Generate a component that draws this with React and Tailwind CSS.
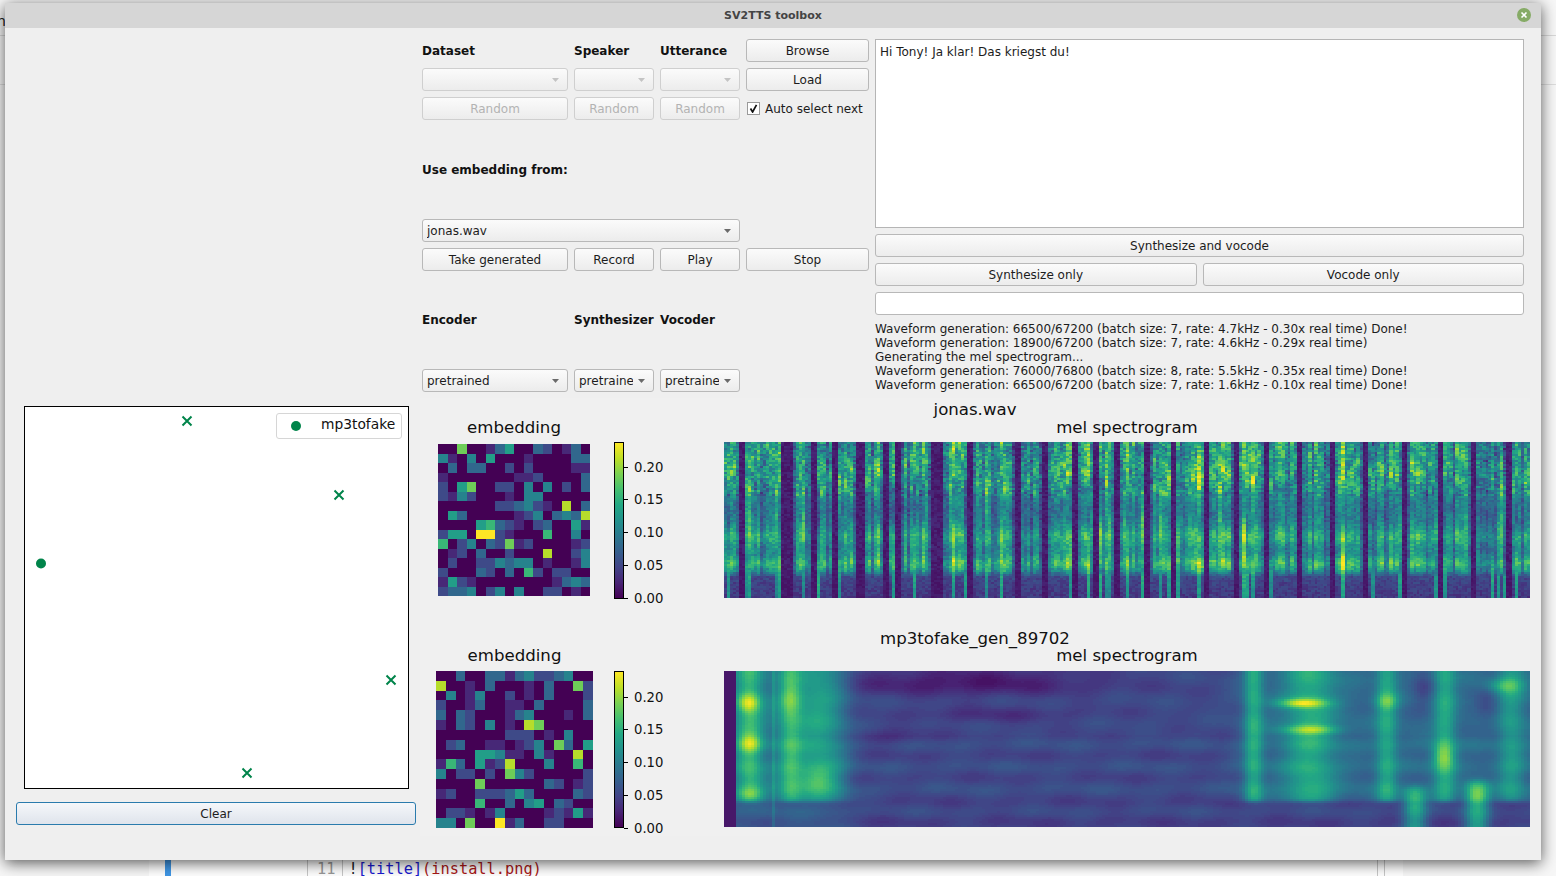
import React from 'react';

const font = { fontFamily: '"DejaVu Sans", sans-serif' };

// viridis lookup
const VIRIDIS = ['#440154', '#482475', '#414487', '#355f8d', '#2a788e', '#21918c', '#22a884', '#44bf70', '#7ad151', '#bddf26', '#fde725'];
const toRgb = (h) => [1, 3, 5].map((i) => parseInt(h.slice(i, i + 2), 16));
const viridis = (v) => {
  const t = Math.max(0, Math.min(1, v)) * (VIRIDIS.length - 1);
  const i = Math.min(Math.floor(t), VIRIDIS.length - 2);
  const a = toRgb(VIRIDIS[i]);
  const b = toRgb(VIRIDIS[i + 1]);
  const f = t - i;
  return `rgb(${a.map((c, k) => Math.round(c + (b[k] - c) * f)).join(',')})`;
};

const rng = (seed) => () => {
  seed = (seed * 1664525 + 1013904223) % 4294967296;
  return seed / 4294967296;
};

const HEAT_A = [
  '0070013500320130', '4104050001000033', '0303300202000011', '1000000011200003',
  '2057002204040203', '2142000104400000', '0000002234210803', '0530000012403438',
  '0000563210230051', '2550992100060040', '6024032712000012', '0120300200080024',
  '0200224344010014', '2000320306202200', '1521000000001343', '2334024040022010',
];
const HEAT_B = [
  '0030033134223400', '8001030001030072', '0401400201030002', '2001300110300003',
  '3032000134000103', '1032040108700000', '0000000222010400', '0230011012407305',
  '0000554110410080', '1630512800040060', '4022020742000002', '0000700000032012',
  '1200222353000032', '0000600304503200', '0221014000012151', '4407009130022000',
];

function Heatmap({ data, size }) {
  return (
    <svg width={size} height={size} viewBox="0 0 16 16" shapeRendering="crispEdges" className="block">
      {data.map((row, y) =>
        row.split('').map((c, x) => <rect key={`${x}-${y}`} x={x} y={y} width="1.02" height="1.02" fill={viridis(Number(c) / 9)} />)
      )}
    </svg>
  );
}

// groups the cells by colour so the svg stays small
function Spectro({ value, cols, rows, height }) {
  const buckets = {};
  const w = 806 / cols;
  const h = height / rows;
  for (let x = 0; x < cols; x++) {
    for (let y = 0; y < rows; y++) {
      const b = Math.round(Math.max(0, Math.min(1, value(x / cols, y / rows, x, y))) * 63);
      (buckets[b] = buckets[b] || []).push(`M${(x * w).toFixed(1)} ${(y * h).toFixed(1)}h${(w + 0.4).toFixed(1)}v${(h + 0.4).toFixed(1)}h-${(w + 0.4).toFixed(1)}z`);
    }
  }
  return (
    <svg width="806" height={height} viewBox={`0 0 806 ${height}`} shapeRendering="crispEdges" className="block">
      {Object.keys(buckets).map((b) => <path key={b} d={buckets[b].join('')} fill={viridis(b / 63)} />)}
    </svg>
  );
}

// first spectrogram: loud speech with silent gaps
const DARK = [[17, 21], [57, 61], [64, 69], [88, 91], [109, 114], [133, 140], [159, 164], [173, 178], [207, 211], [214, 218], [243, 248], [293, 296], [318, 322], [350, 354], [371, 375], [392, 397], [420, 425], [447, 450], [481, 486], [512, 516], [540, 545], [575, 580], [608, 612], [640, 644], [680, 684], [716, 719], [748, 752], [785, 790]];
const makeSpeech = () => {
  const cols = 269;
  const r = rng(77);
  const gain = [];
  const streak = [];
  const phase = [];
  for (let i = 0; i < cols; i++) {
    let g = 0.9 + r() * 0.3;
    if (r() < 0.22) g = 0.6 + r() * 0.25;
    gain.push(g);
    streak.push(r() < 0.35 ? 0.08 + r() * 0.2 : 0);
    phase.push(r() * 6.28);
  }
  DARK.forEach(([a, b]) => {
    for (let px = a; px <= b; px += 3) {
      const c = Math.floor(px / 3);
      gain[c] = 0;
      if (c > 0 && gain[c - 1] > 0) gain[c - 1] *= 0.8;
      if (c < cols - 1) gain[c + 1] *= 0.8;
    }
  });
  const noise = new Float32Array(cols * 80).map(() => r());
  return (t, u, x, y) => {
    const g = gain[x];
    const n = noise[x * 78 + y];
    const low = u > 0.86 ? 1 : u > 0.82 ? (u - 0.82) / 0.04 : 0;
    const lowV = g === 0 ? 0.04 + n * 0.05 : 0.16 + n * 0.1 - (u - 0.86) * 0.4 + (streak[x] > 0.18 ? streak[x] * 1.5 : 0);
    if (g === 0) return low ? lowV : 0.04 + n * 0.08;
    let p = 0.46;
    p += 0.1 * Math.exp(-Math.pow((u - 0.18) / 0.16, 2));
    p += 0.14 * Math.exp(-Math.pow((u - 0.6) / 0.05, 2));
    p += 0.18 * Math.exp(-Math.pow((u - 0.77) / 0.04, 2));
    p -= 0.08 * Math.exp(-Math.pow((u - 0.42) / 0.1, 2));
    const formant = 0.08 * Math.sin(u * 34 + phase[x]) + 0.05 * Math.sin(u * 12 + x * 0.11);
    const spread = u < 0.34 ? 0.3 : 0.16;
    const top = p * g + streak[x] * (0.5 + 0.5 * Math.sin(u * 9 + phase[x])) + formant * g * (u < 0.34 ? 1 : 0.4) + (n - 0.5) * spread;
    return top * (1 - low) + lowV * low;
  };
};

// second spectrogram: smooth generated mel
const bump = (x, y, cx, cy, sx, sy, a) => a * Math.exp(-Math.pow((x - cx) / sx, 2) - Math.pow((y - cy) / sy, 2));
const sig = (d) => 1 / (1 + Math.exp(-d));
const COLS_TOP = [[0.03, 0.016, 0.3], [0.08, 0.014, 0.26], [0.115, 0.03, 0.2], [0.655, 0.011, 0.3], [0.725, 0.03, 0.28], [0.82, 0.012, 0.26], [0.892, 0.013, 0.26], [0.975, 0.016, 0.2]];
const SPOTS = [[0.028, 0.2, 0.014, 0.06, 0.3], [0.03, 0.46, 0.014, 0.06, 0.26], [0.08, 0.18, 0.014, 0.09, 0.14], [0.715, 0.2, 0.03, 0.03, 0.4], [0.725, 0.37, 0.036, 0.03, 0.3], [0.82, 0.19, 0.014, 0.05, 0.2], [0.89, 0.54, 0.014, 0.08, 0.28], [0.965, 0.09, 0.024, 0.05, 0.24], [0.115, 0.68, 0.024, 0.08, 0.16], [0.03, 0.78, 0.018, 0.04, 0.14], [0.932, 0.8, 0.014, 0.06, 0.12], [0.855, 0.86, 0.012, 0.05, 0.08]];
const mel = (x, y) => {
  if (x < 0.014) return 0.07;
  const w = sig((0.83 - y) / 0.008);
  const left = sig((0.15 - x) / 0.008);
  const right = sig((x - 0.64) / 0.01);
  let v = 0.22;
  v += 0.015 * Math.sin(x * 90 + y * 13) + 0.015 * Math.sin(x * 37 - y * 29) + 0.025 * Math.sin(y * 44) * (y > 0.4 ? 1 : 0.4);
  v += w * (0.16 * left + 0.12 * right);
  v += (1 - w) * (0.08 * left - 0.02);
  v -= bump(x, y, 0.3, 0.06, 0.16, 0.09, 0.16);
  v -= bump(x, y, 0.33, 0.28, 0.11, 0.05, 0.08);
  v -= bump(x, y, 0.2, 0.42, 0.05, 0.05, 0.08);
  v -= bump(x, y, 0.865, 0.1, 0.015, 0.15, 0.12);
  v -= bump(x, y, 0.945, 0.2, 0.015, 0.15, 0.1);
  COLS_TOP.forEach(([c, s, a]) => { v += w * a * Math.exp(-Math.pow((x - c) / s, 2)); });
  v += 0.32 * sig((y - 0.74) / 0.015) * Math.exp(-Math.pow((x - 0.855) / 0.014, 2));
  v += 0.36 * sig((y - 0.7) / 0.015) * Math.exp(-Math.pow((x - 0.932) / 0.014, 2));
  v += 0.1 * Math.exp(-Math.pow((x - 0.06) / 0.002, 2));
  SPOTS.forEach(([cx, cy, sx, sy, a]) => { v += bump(x, y, cx, cy, sx, sy, a); });
  return v;
};

const speech = makeSpeech();

function Button({ children, disabled, focus, className = '' }) {
  return (
    <button
      className={`h-[23px] rounded-[3px] border text-[12px] leading-none ${
        focus ? 'border-[#2a7bad] bg-linear-to-b from-[#f5f7fa] to-[#dfe4ec] text-[#1c1c1c]' : 'border-[#b8b8b8] bg-linear-to-b from-[#fbfbfb] to-[#ececec]'
      } ${disabled ? 'text-[#b3b3b3] border-[#cfcfcf]' : 'text-[#1c1c1c]'} ${className}`}
    >
      {children}
    </button>
  );
}

function Combo({ value, disabled, clip }) {
  return (
    <div className={`flex h-[23px] items-center rounded-[3px] border bg-linear-to-b from-[#fbfbfb] to-[#ececec] pl-[4px] pr-[8px] text-[12px] text-[#1c1c1c] ${disabled ? 'border-[#cfcfcf]' : 'border-[#b8b8b8]'}`}>
      <span className={`flex-1 overflow-hidden whitespace-nowrap ${clip ? 'max-w-[54px]' : ''}`}>{value}</span>
      <svg width="7" height="4" viewBox="0 0 7 4" className="ml-auto shrink-0"><path d="M0 0h7L3.5 4z" fill={disabled ? '#c4c4c4' : '#6a6a6a'} /></svg>
    </div>
  );
}

const Label = ({ children, className = '' }) => <div className={`flex items-center text-[12px] font-bold text-[#111] whitespace-nowrap ${className}`}>{children}</div>;

function Controls() {
  return (
    <div className="grid grid-cols-[146px_80px_80px_123px] grid-rows-[23px_23px_23px_87px_23px_23px_86px_23px] gap-[6px]">
      <Label>Dataset</Label>
      <Label>Speaker</Label>
      <Label>Utterance</Label>
      <Button>Browse</Button>
      <Combo disabled />
      <Combo disabled />
      <Combo disabled />
      <Button>Load</Button>
      <Button disabled>Random</Button>
      <Button disabled>Random</Button>
      <Button disabled>Random</Button>
      <div className="flex items-center gap-[5px] pl-px text-[12px] text-[#1c1c1c] whitespace-nowrap">
        <span className="flex h-[13px] w-[13px] items-center justify-center border border-[#9a9a9a] bg-white">
          <svg width="9" height="9" viewBox="0 0 9 9"><path d="M1.5 4.5 3.6 8 7.5 .8" fill="none" stroke="#111" strokeWidth="1.7" /></svg>
        </span>
        Auto select next
      </div>
      <Label className="col-span-4">Use embedding from:</Label>
      <div className="col-span-3"><Combo value="jonas.wav" /></div>
      <div />
      <Button>Take generated</Button>
      <Button>Record</Button>
      <Button>Play</Button>
      <Button>Stop</Button>
      <Label>Encoder</Label>
      <Label>Synthesizer</Label>
      <Label>Vocoder</Label>
      <div />
      <Combo value="pretrained" />
      <Combo value="pretrained" clip />
      <Combo value="pretrained" clip />
      <div />
    </div>
  );
}

function SynthPanel() {
  return (
    <div className="flex w-[649px] flex-col gap-[6px]">
      <div className="h-[189px] border border-[#b5b5b5] bg-white px-[4px] py-[4px] text-[12px] leading-[16px] text-[#1c1c1c]">Hi Tony! Ja klar! Das kriegst du!</div>
      <Button className="w-full">Synthesize and vocode</Button>
      <div className="flex gap-[6px]">
        <Button className="flex-1">Synthesize only</Button>
        <Button className="flex-1">Vocode only</Button>
      </div>
      <div className="h-[23px] rounded-[3px] border border-[#b8b8b8] bg-white" />
      <div className="mt-px text-[12px] leading-[14px] text-[#1c1c1c] whitespace-nowrap">
        <div>Waveform generation: 66500/67200 (batch size: 7, rate: 4.7kHz - 0.30x real time) Done!</div>
        <div>Waveform generation: 18900/67200 (batch size: 7, rate: 4.6kHz - 0.29x real time)</div>
        <div>Generating the mel spectrogram...</div>
        <div>Waveform generation: 76000/76800 (batch size: 8, rate: 5.5kHz - 0.35x real time) Done!</div>
        <div>Waveform generation: 66500/67200 (batch size: 7, rate: 1.6kHz - 0.10x real time) Done!</div>
      </div>
    </div>
  );
}

function Colorbar({ className = '', tickTop }) {
  return (
    <div className={`flex ${className}`}>
      <div className="h-[157px] w-[10px] border border-black bg-[linear-gradient(to_top,#440154,#482475,#414487,#355f8d,#2a788e,#21918c,#22a884,#44bf70,#7ad151,#bddf26,#fde725)]" />
      <div className={`${tickTop} flex h-[146px] flex-col justify-between text-[13.2px] leading-[15px] text-[#111]`}>
        {['0.20', '0.15', '0.10', '0.05', '0.00'].map((t) => (
          <div key={t} className="flex items-center gap-[6px]">
            <span className="h-px w-[4px] bg-black" />
            {t}
          </div>
        ))}
      </div>
    </div>
  );
}

function Scatter() {
  const crosses = [[162, 14], [314, 88], [366, 273], [222, 366]];
  return (
    <div className="relative ml-[8px] h-[383px] w-[385px] border border-black bg-white">
      <svg width="383" height="381" className="block">
        <circle cx="16" cy="156.5" r="5" fill="#00844a" />
        {crosses.map(([x, y]) => (
          <path key={x} d={`M${x - 4.5} ${y - 4.5}l9 9m0-9l-9 9`} stroke="#00844a" strokeWidth="2" />
        ))}
      </svg>
      <div className="absolute right-[6px] top-[6px] flex h-[26px] w-[126px] items-center rounded-[3px] border border-[#d6d6d6] bg-white pl-[14px] text-[13.8px] text-[#111]">
        <span className="h-[10px] w-[10px] rounded-full bg-[#00844a]" />
        <span className="ml-[20px] -mt-[3px]">mp3tofake</span>
      </div>
    </div>
  );
}

function Figure({ title, heat, heatSize, heatLeft, heatTop, colorGap, top, titleMb, specTop, tickTop, value }) {
  return (
    <div className={`w-[1110px] bg-[#f0f0f0] text-[#111] ${top}`}>
      <div className={`text-center text-[16.6px] leading-[20px] ${titleMb}`}>{title}</div>
      <div className="flex">
        <div className={`flex flex-col items-center ${heatLeft}`}>
          <div className={`text-center text-[16.6px] leading-[20px] ${heatTop}`}>embedding</div>
          <Heatmap data={heat} size={heatSize} />
        </div>
        <Colorbar className={colorGap} tickTop={tickTop} />
        <div className="absolute ml-[304px] w-[806px]">
          <div className={`text-center text-[16.6px] leading-[20px] ${specTop}`}>mel spectrogram</div>
          <Spectro value={value} cols={269} rows={78} height={156} />
        </div>
      </div>
    </div>
  );
}

export default function App() {
  return (
    <div className="relative h-[876px] w-[1556px] overflow-hidden bg-[#f7f7f7]" style={font}>
      {/* desktop behind the window */}
      <div className="absolute -left-[3px] top-[11px] text-[14px] text-[#222]">n</div>
      <div className="absolute inset-x-0 top-[35px] h-px bg-[#d8d8d8]" />
      <div className="absolute inset-x-0 top-[84px] h-px bg-[#dddddd]" />
      <div className="absolute inset-x-[1541px] top-[157px] h-px bg-[#cccccc]" />
      <div className="absolute bottom-0 left-[149px] flex h-[20px] w-[1254px] bg-white">
        <span className="ml-[16px] h-full w-[6px] bg-[#3f97e6]" />
        <span className="ml-[136px] h-full w-px bg-[#c8c8c8]" />
        <span className="ml-[9px] mt-[5px] font-['DejaVu_Sans_Mono',monospace] text-[15.3px] leading-[17px] text-[#999]">11</span>
        <span className="ml-[7px] h-full w-px bg-[#c8c8c8]" />
        <span className="ml-[5px] mt-[5px] whitespace-nowrap font-['DejaVu_Sans_Mono',monospace] text-[15.3px] leading-[17px]">
          <span className="text-[#222]">!</span><span className="text-[#1a1ad0]">[title]</span><span className="text-[#a81818]">(install.png)</span>
        </span>
        <span className="ml-[835px] h-full w-px bg-[#c8c8c8]" />
        <span className="ml-[6px] h-full w-px bg-[#c8c8c8]" />
      </div>

      {/* app window */}
      <div className="absolute left-[5px] top-[3px] flex h-[857px] w-[1536px] flex-col bg-[#efefef] shadow-[0_3px_14px_rgba(0,0,0,0.65)]">
        <div className="relative flex h-[25px] items-center justify-center bg-[#d6d6d6] pt-[2px] text-[11px] font-bold text-[#444]">
          SV2TTS toolbox
          <span className="absolute right-[10px] top-[5px] flex h-[14px] w-[14px] items-center justify-center rounded-full bg-[#86ab66]">
            <svg width="8" height="8" viewBox="0 0 8 8"><path d="M1.5 1.5l5 5m0-5l-5 5" stroke="#fff" strokeWidth="1.6" /></svg>
          </span>
        </div>
        <div className="flex flex-1">
          <div className="flex w-[415px] flex-col justify-end pb-[35px] pl-[11px]">
            <Scatter />
            <Button focus className="mt-[13px] w-[400px]">Clear</Button>
          </div>
          <div className="flex-1 overflow-hidden">
            <div className="flex gap-[6px] pl-[2px] pt-[11px]">
              <Controls />
              <SynthPanel />
            </div>
            <Figure title="jonas.wav" heat={HEAT_A} heatSize={152} heatLeft="ml-[18px]" heatTop="h-[26px]" colorGap="ml-[24px] mt-[24px]" top="mt-[6px] pt-[2px] h-[222px]" titleMb="-mb-[2px]" specTop="h-[24px]" tickTop="mt-[17.5px]" value={speech} />
            <Figure title="mp3tofake_gen_89702" heat={HEAT_B} heatSize={157} heatLeft="ml-[16px]" heatTop="h-[25px]" colorGap="ml-[21px] mt-[25px]" top="pt-[9px]" titleMb="-mb-[3px]" specTop="h-[25px]" tickTop="mt-[18.5px]" value={(x, y) => mel(x, y)} />
          </div>
        </div>
      </div>
    </div>
  );
}
